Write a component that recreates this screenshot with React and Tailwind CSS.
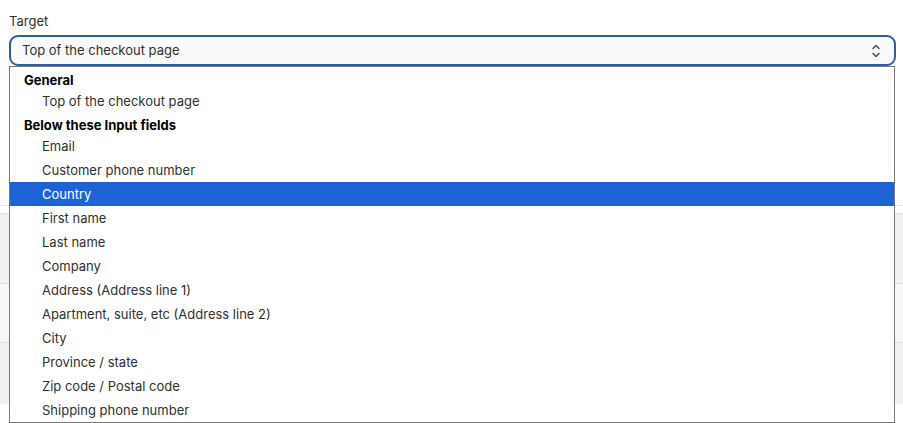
import { useState } from 'react'

const groups = [
  { label: 'General', options: ['Top of the checkout page'] },
  {
    label: 'Below these Input fields',
    options: [
      'Email',
      'Customer phone number',
      'Country',
      'First name',
      'Last name',
      'Company',
      'Address (Address line 1)',
      'Apartment, suite, etc (Address line 2)',
      'City',
      'Province / state',
      'Zip code / Postal code',
      'Shipping phone number'
    ]
  }
]

function SelectIcon() {
  return (
    <svg viewBox="0 0 20 20" className="w-5 h-5 fill-[#4a4a4a]">
      <path d="M10.884 4.323a1.25 1.25 0 0 0-1.768 0l-2.646 2.647a.75.75 0 0 0 1.06 1.06l2.47-2.47 2.47 2.47a.75.75 0 1 0 1.06-1.06l-2.646-2.647Z" />
      <path d="m13.53 13.03-2.646 2.647a1.25 1.25 0 0 1-1.768 0l-2.646-2.647a.75.75 0 0 1 1.06-1.06l2.47 2.47 2.47-2.47a.75.75 0 0 1 1.06 1.06Z" />
    </svg>
  )
}

export default function App() {
  const [selected, setSelected] = useState('Country')

  return (
    <div className="relative h-[423px] w-full overflow-hidden bg-white font-['Inter',sans-serif] text-[13px] text-[#303030]">
      <div className="pt-[11px]">
        <div className="px-[9px]">
          <div className="h-5 leading-5 text-[#303030]">Target</div>
          <div className="mt-1 h-[31px] w-[887px] flex items-center justify-between rounded-[9px] border-2 border-[#2a5ea8] bg-[#fafafa] pl-[11px] pr-[8px] pt-[1px]">
            <span>Top of the checkout page</span>
            <SelectIcon />
          </div>
        </div>

        {/* page content behind the open list */}
        <div className="mt-[139px] flex flex-col">
          <div className="h-[8px] border-t border-[#e6e6e6]" />
          <div className="h-[70px] border-t border-[#e3e3e3] bg-[#f1f1f1]" />
          <div className="h-[59px] border-t border-[#e0e0e0] bg-[#f7f7f7]" />
          <div className="h-[62px] border-t border-[#e0e0e0] bg-[#f1f1f1]" />
        </div>
      </div>

      {/* open option list */}
      <div className="absolute left-[9px] top-[66px] w-[886px] h-[357px] border border-[#767676] bg-white pt-[1px]">
        {groups.map(g => (
          <div key={g.label}>
            <div className="h-[21px] pt-[4px] leading-[17px] pl-[14px] font-bold text-black">{g.label}</div>
            {g.options.map(o => (
              <div
                key={o}
                onClick={() => setSelected(o)}
                className={`h-6 leading-6 pl-[32px] ${selected === o ? 'bg-[#1d63d6] text-white' : 'text-[#303030]'}`}
              >
                {o}
              </div>
            ))}
          </div>
        ))}
      </div>
    </div>
  )
}
